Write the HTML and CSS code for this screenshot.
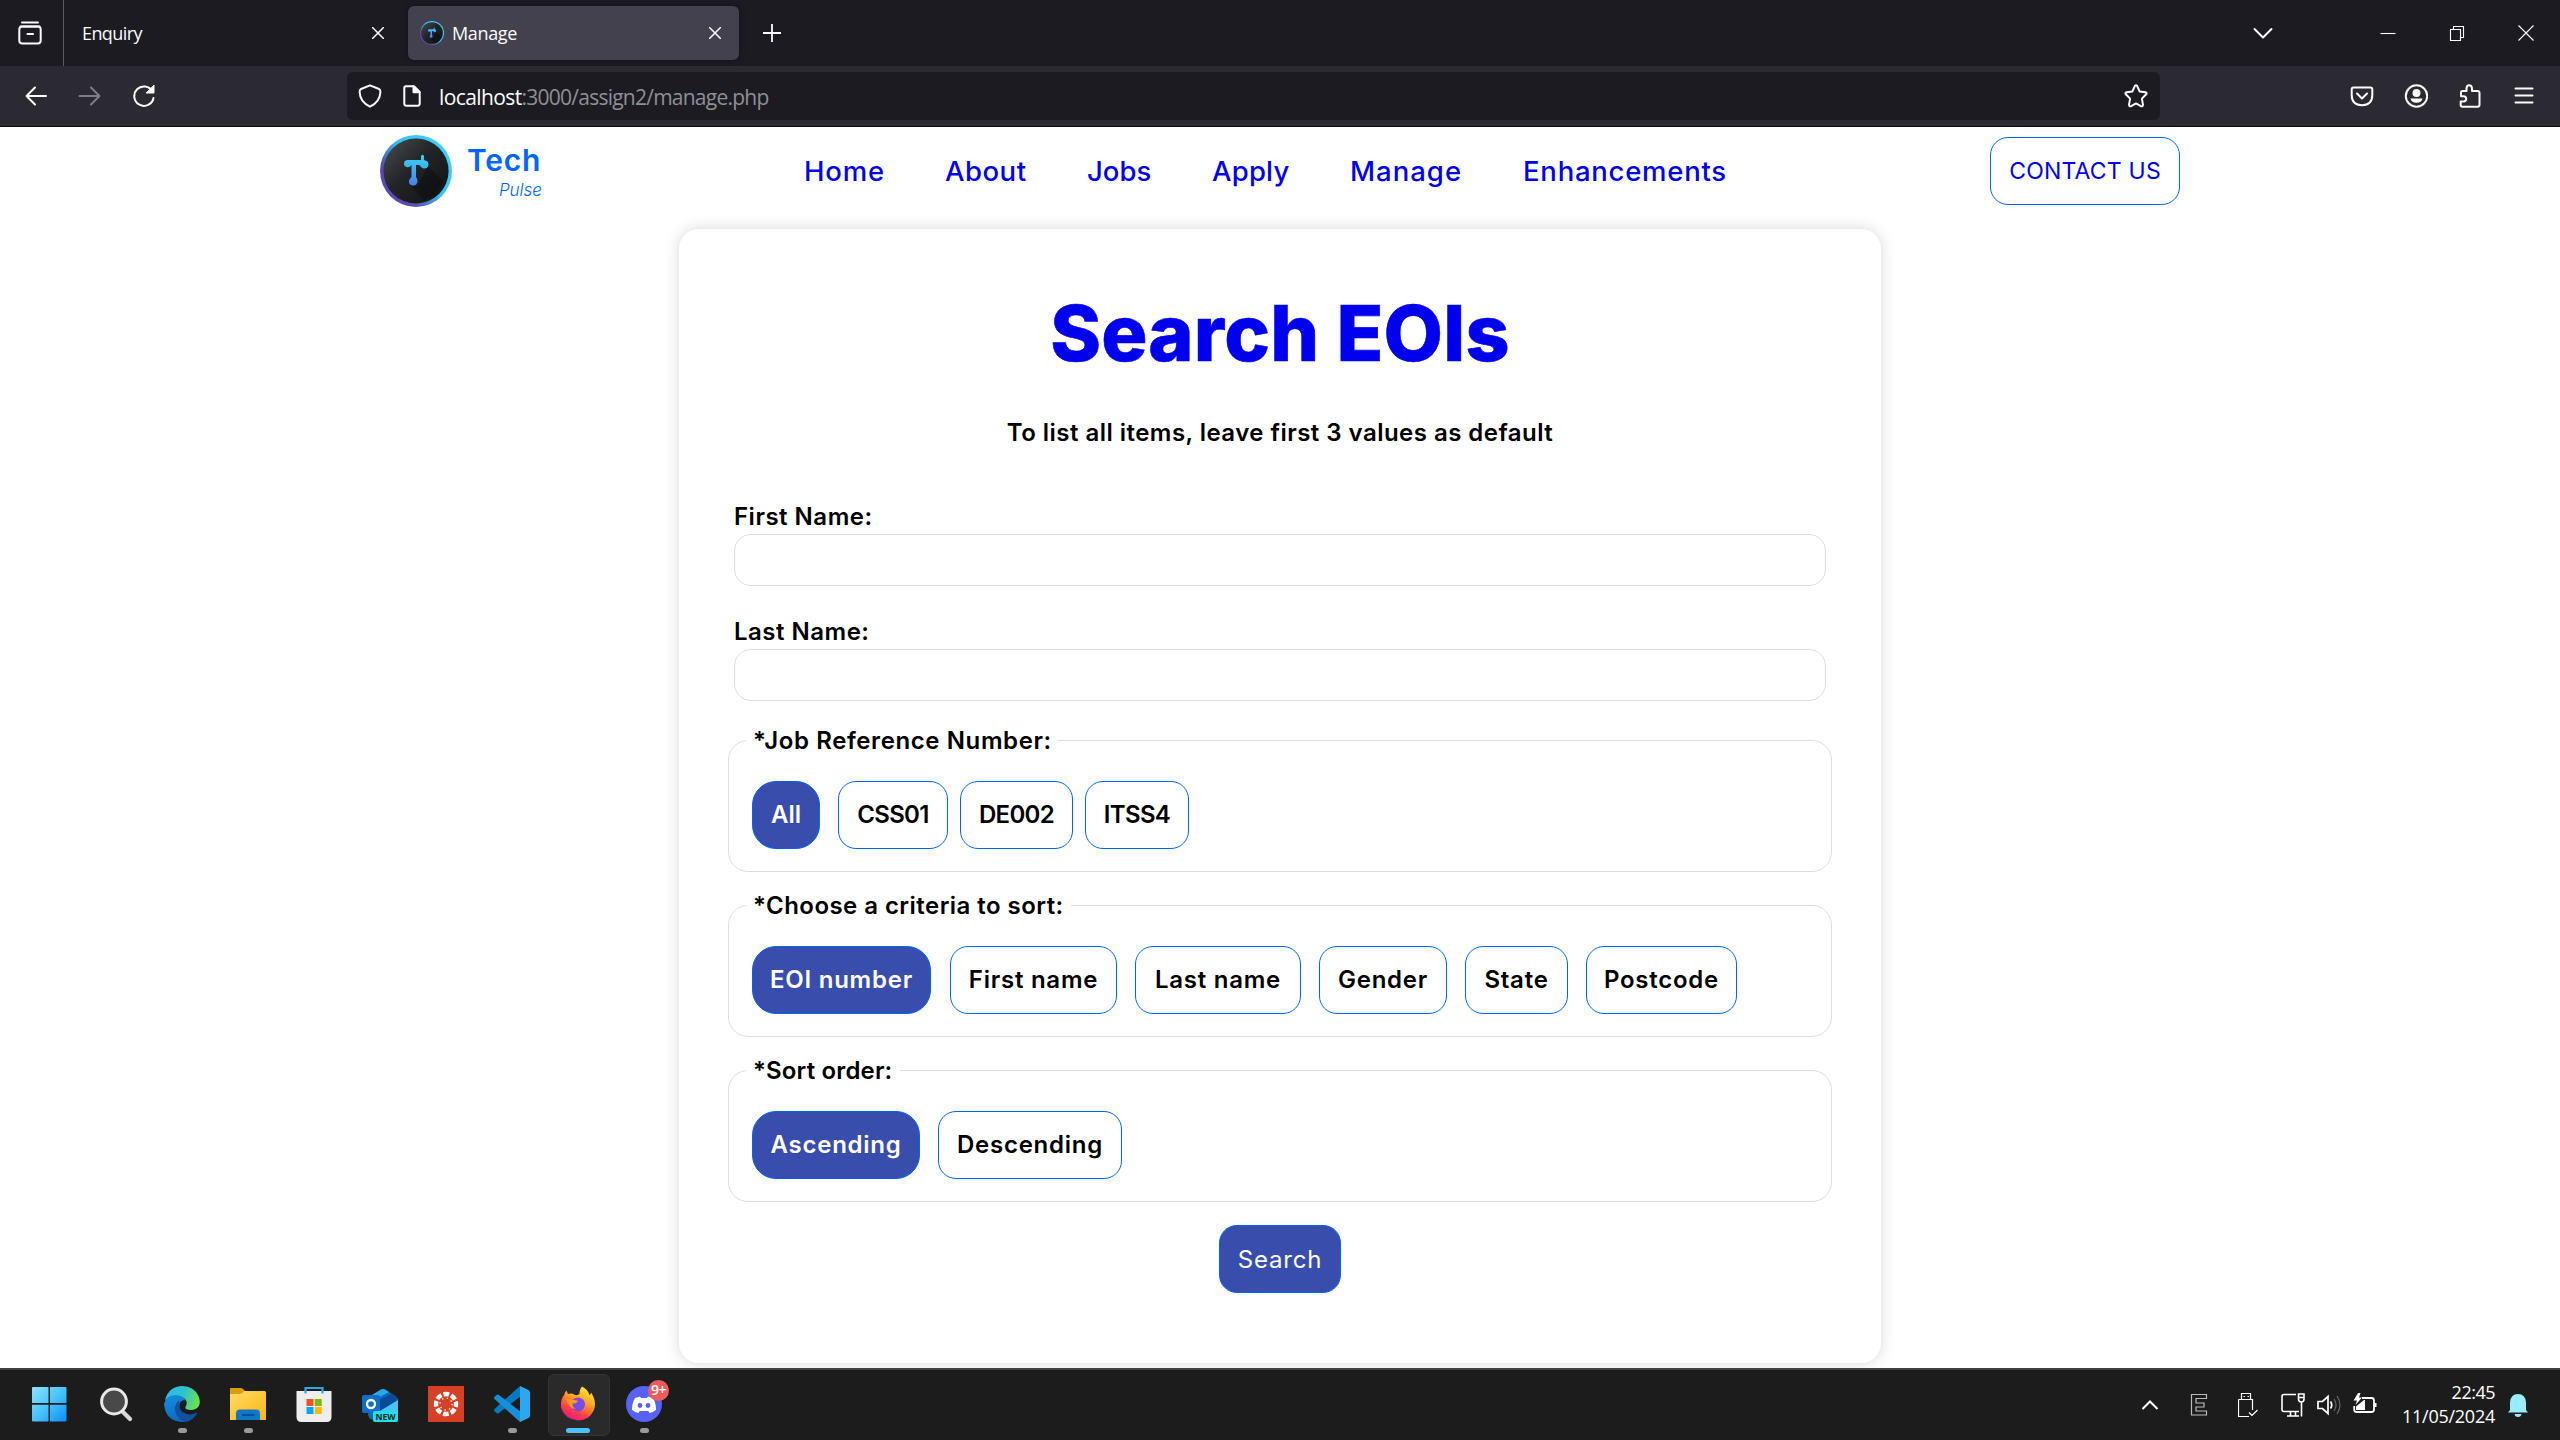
FILE: index.html
```
<!DOCTYPE html>
<html lang="en">
<head>
<meta charset="utf-8">
<title>Manage</title>
<link rel="stylesheet" href="styles.css">
</head>
<body>
<svg class="defs" width="0" height="0" aria-hidden="true">
  <defs>
    <linearGradient id="ring" x1="0" y1="1" x2="1" y2="0.2"><stop offset="0" stop-color="#5b3fc0"/><stop offset=".3" stop-color="#5a4bb0"/><stop offset=".6" stop-color="#35c4f0"/><stop offset="1" stop-color="#3fd0fa"/></linearGradient>
    <linearGradient id="disc" x1="0" y1="0" x2="1" y2="1"><stop offset="0" stop-color="#4a4d52"/><stop offset=".45" stop-color="#222427"/><stop offset="1" stop-color="#101113"/></linearGradient>
    <linearGradient id="tee" x1="0" y1="0" x2="0" y2="1"><stop offset="0" stop-color="#35d5f5"/><stop offset="1" stop-color="#4a80ee"/></linearGradient>
    <symbol id="logo" viewBox="0 0 72 72">
      <circle cx="36" cy="36" r="36" fill="url(#ring)"/>
      <circle cx="36" cy="36" r="32.6" fill="url(#disc)"/>
      <path d="M38 50 48 31 63 46Q58 60 44 65L32 52z" fill="#0b0c0d" opacity=".45"/>
      <path d="M28 25H41V21Q42.500 18.500 44 21V25Q49 26 48.500 30Q47.500 34 43.500 33.500Q40.500 33 39.500 30H36V42Q38 44 37.500 47Q36 51 33 50.500Q28.500 50 29 46Q29.200 44 31.500 42V30Q30 32.500 27.500 32.300Q24 32 24 28.600Q24 25 28 25z" fill="url(#tee)"/>
    </symbol>
  </defs>
</svg>

<header class="tabs">
  <div class="archive">
    <svg width="24" height="24" viewBox="0 0 24 24" class="line"><path d="M4 1.600H20M2.500 5.500H21.500"/><rect x="1.300" y="5.500" width="21.400" height="17" rx="3"/><path d="M9.500 13H15"/></svg>
  </div>
  <div class="tab">
    <span class="tab-name enquiry">Enquiry</span>
    <svg class="line x" width="12" height="12" viewBox="0 0 12 12"><path d="M.5.5 11.500 11.500M11.500.5.5 11.500"/></svg>
  </div>
  <div class="tab active">
    <svg width="24" height="24"><use href="#logo"/></svg>
    <span class="tab-name">Manage</span>
    <svg class="line x" width="12" height="12" viewBox="0 0 12 12"><path d="M.5.5 11.500 11.500M11.500.5.5 11.500"/></svg>
  </div>
  <svg class="line plus" width="18" height="18" viewBox="0 0 18 18"><path d="M0 9H18M9 0V18"/></svg>
  <div class="win">
    <svg class="line all-tabs" width="24" height="24" viewBox="0 0 24 24"><path d="M3.500 8 12 16.500 20.500 8"/></svg>
    <span><svg class="thin" width="16" height="16" viewBox="0 0 16 16"><path d="M.5 8.500H15.500"/></svg></span>
    <span><svg class="thin" width="16" height="16" viewBox="0 0 16 16"><path d="M1.500 4.500H11.500V15.500H1.500zM4.500 4.500V1.500H14.500V12.500H11.500"/></svg></span>
    <span><svg class="thin" width="16" height="16" viewBox="0 0 16 16"><path d="M.5.5 15.500 15.500M15.500.5.5 15.500"/></svg></span>
  </div>
</header>

<div class="toolbar">
  <div class="nav-buttons">
    <svg class="line" width="24" height="24" viewBox="0 0 24 24"><path d="M22 12H2.500M11 3.500 2.500 12 11 20.500"/></svg>
    <svg class="line dim" width="24" height="24" viewBox="0 0 24 24"><path d="M1.500 12H21.500M13 3.500 21.500 12 13 20.500"/></svg>
    <svg class="line" width="24" height="24" viewBox="0 0 24 24"><path d="M20.500 7.500A9.700 9.700 0 1 0 21.500 14"/><path d="M22 1.500V9H14.500z" fill="#fbfbfe" stroke-width="1"/></svg>
  </div>
  <div class="url">
    <svg class="line" width="24" height="24" viewBox="0 0 24 24"><path d="M12 1.300 21 5Q22.500 5.600 22.400 8Q22 18 12 22.700Q2 18 1.600 8Q1.500 5.600 3 5z"/></svg>
    <svg class="line page-icon" width="20" height="24" viewBox="0 0 20 24"><path d="M4 2.300H12L17.700 8V19.500Q17.700 21.700 15.500 21.700H4.500Q2.300 21.700 2.300 19.500V4Q2.300 2.300 4 2.300z"/><path d="M11.500 2.500V8.300H17.500z" fill="#fbfbfe"/></svg>
    <span class="address"><b>localhost</b><i>:3000/assign2/manage.php</i></span>
    <svg class="line star" width="24" height="24" viewBox="0 0 24 24"><path d="M10.900 1.900Q12 .4 13.100 1.900L15.600 7.400 21.400 8.200Q23.300 8.800 22.200 10.300L17.900 14.600 19 20.800Q19 22.700 17.300 22.300L12 19.400 6.700 22.300Q5 22.700 5 20.800L6.100 14.600 1.800 10.300Q.7 8.800 2.600 8.200L8.400 7.400z"/></svg>
  </div>
  <div class="actions">
    <svg class="line" width="24" height="24" viewBox="0 0 24 24"><path d="M3.500 3.500H20.500Q22.300 3.500 22.300 5.500V11Q22.300 21 12 21.300Q1.700 21 1.700 11V5.500Q1.700 3.500 3.500 3.500zM7 9.500 12 14.500 17 9.500"/></svg>
    <svg class="line" width="24" height="24" viewBox="0 0 24 24"><circle cx="12.500" cy="12" r="10.700"/><path d="M6.500 14.500H18.500Q17.500 18.800 12.500 18.800T6.500 14.500z" fill="#fbfbfe" stroke="none"/><circle cx="12.500" cy="9" r="4" fill="#fbfbfe" stroke="none"/></svg>
    <svg class="line" width="24" height="24" viewBox="0 0 24 24"><path d="M3 8.300Q3 7 4.500 7H8.500V4.500Q8.700 1.200 11.200 1.200T14 4.500V7H19.500Q21.500 7 21.500 9V20.800Q21.500 22.700 19.500 22.700H4.500Q2.700 22.700 2.700 21V17.500H5.500Q8.200 17.200 8.200 14.900T5.500 12.300H3z"/></svg>
    <svg class="line" width="24" height="24" viewBox="0 0 24 24"><path d="M3.500 4.500H20.500M3.500 11.500H20.500M3.500 18.500H20.500"/></svg>
  </div>
</div>

<main class="page">
  <div class="site-head">
    <a class="brand">
      <svg width="72" height="72"><use href="#logo"/></svg>
      <span class="brand-text"><span class="tech">Tech</span><span class="pulse">Pulse</span></span>
    </a>
    <nav class="menu">
      <a class="home">Home</a><a class="about">About</a><a class="jobs">Jobs</a><a class="apply">Apply</a><a class="manage">Manage</a><a class="enh">Enhancements</a>
    </nav>
    <a class="contact">CONTACT US</a>
  </div>

  <form class="card">
    <h1>Search EOIs</h1>
    <p class="hint">To list all items, leave first 3 values as default</p>
    <label class="field">First Name:<input type="text"></label>
    <label class="field">Last Name:<input type="text"></label>
    <fieldset class="group">
      <legend class="lg-job">*Job Reference Number:</legend>
      <div class="pills">
        <span class="pill on w-all">All</span><span class="pill code w-css">CSS01</span><span class="pill code near w-de">DE002</span><span class="pill code near w-it">ITSS4</span>
      </div>
    </fieldset>
    <fieldset class="group">
      <legend class="lg-crit">*Choose a criteria to sort:</legend>
      <div class="pills">
        <span class="pill on w-eoi">EOI number</span><span class="pill w-first">First name</span><span class="pill w-last">Last name</span><span class="pill w-gender">Gender</span><span class="pill w-state">State</span><span class="pill w-post">Postcode</span>
      </div>
    </fieldset>
    <fieldset class="group">
      <legend class="lg-order">*Sort order:</legend>
      <div class="pills">
        <span class="pill on w-asc">Ascending</span><span class="pill w-desc">Descending</span>
      </div>
    </fieldset>
    <button class="search" type="button">Search</button>
  </form>
</main>

<footer class="taskbar">
  <div class="apps">
    <div class="app"><svg width="36" height="36" viewBox="2 0 36 36"><defs><linearGradient id="wn" x1="0" y1="0" x2="1" y2="1"><stop offset="0" stop-color="#8be3ff"/><stop offset=".5" stop-color="#48c4fb"/><stop offset="1" stop-color="#0a8dfa"/></linearGradient></defs><path d="M3 1H18.500V17H2V2Q2 1 3 1zM20 1H35.500Q36.500 1 36.500 2V17H20zM2 18.800H18.500V35.500H3Q2 35.500 2 34.500zM20 18.800H36.500V34.500Q36.500 35.500 35.500 35.500H20z" fill="url(#wn)"/></svg></div>
    <div class="app"><svg width="36" height="36" viewBox="0 0 36 36"><path d="M24 25 32 33" stroke="#d5d8dc" stroke-width="4.200" stroke-linecap="round"/><circle cx="16" cy="15.500" r="12.400" fill="#494949" stroke="#e8e9eb" stroke-width="3"/></svg></div>
    <div class="app run"><svg width="36" height="36" viewBox="0 0 36 36"><defs><linearGradient id="e1" x1="0" y1=".2" x2="1" y2=".5"><stop offset="0" stop-color="#34b8ed"/><stop offset=".5" stop-color="#2cc3cf"/><stop offset="1" stop-color="#6be053"/></linearGradient><linearGradient id="e2" x1="0" y1="0" x2=".5" y2="1"><stop offset="0" stop-color="#1690dd"/><stop offset="1" stop-color="#0668c4"/></linearGradient></defs>
      <path d="M1 14Q5 0 18.500 0Q30 .5 34.500 10Q38 19 32 22.800Q27 25 22.500 23.200Q20.500 22 22 20Q24.500 14 18 11Q10 8 1 14z" fill="url(#e1)"/>
      <path d="M0 18Q2 9.500 11 9Q19 9.500 21.500 14.500Q17 13 15.500 18Q14 27 22 30Q28 31 33 27Q28.500 36 18 36Q1.500 35 0 18z" fill="url(#e2)"/>
      <path d="M15.500 14Q8.500 20 12 28Q15 34 21 35.500Q29.500 34 33 27.200Q32 26.300 30.500 27.500Q24 30 18.500 26Q13.500 22 15.500 14z" fill="#12519d"/></svg></div>
    <div class="app run"><svg width="36" height="36" viewBox="0 0 36 36"><defs><linearGradient id="fo" x1="0" y1="0" x2="1" y2="1"><stop offset="0" stop-color="#ffdc66"/><stop offset="1" stop-color="#f9b513"/></linearGradient></defs><path d="M0 3Q0 2 1 2H11Q12.500 2 15 5V9H0z" fill="#dd9d07"/><path d="M0 8H10Q12 8 14.500 5H34.500Q36 5 36 6.500V34H0z" fill="url(#fo)"/><path d="M6 34V27.500Q6 23.500 10 23.500H26Q30 23.500 30 27.500V34z" fill="#1076c8"/><path d="M12 29H24.500" stroke="#064a8b" stroke-width="1.600"/></svg></div>
    <div class="app"><svg width="36" height="36" viewBox="0 0 36 36"><path d="M.5 5H35.500V31Q35.500 36 30.500 36H5.500Q.5 36 .5 31z" fill="#eee"/><path d="M9.500 7.500V2H26.500V7.500" fill="none" stroke="#22abe8" stroke-width="2.200"/><path d="M10.500 13H17.500V20H10.500z" fill="#f25022"/><path d="M18.700 13H25.700V20H18.700z" fill="#7fba00"/><path d="M10.500 21H17.500V28H10.500z" fill="#00a4ef"/><path d="M18.700 21H25.700V28H18.700z" fill="#ffb900"/></svg></div>
    <div class="app"><svg width="36" height="36" viewBox="0 0 36 36"><path d="M5 12 19 3.500Q21 2.500 23 3.500L34 10.500 36 13V34H12Q6 33 6 28z" fill="#0d6ab8"/><path d="M9 9.500 19 3.500Q21 2.500 23 3.500L27 6 14 13z" fill="#28a8ea"/><path d="M17 14 30 7.500 35 11.500V15L18 25z" fill="#0b4a96"/><path d="M18 25 36 14V34H18z" fill="#49c3f5"/><rect y="9" width="18" height="18" rx="2" fill="#0f6fc6"/><circle cx="9" cy="18" r="4" fill="none" stroke="#fff" stroke-width="2.300"/><rect x="11" y="25" width="25" height="11" rx="2" fill="#25dfe2"/><text x="23.500" y="34.200" text-anchor="middle" textLength="20" lengthAdjust="spacingAndGlyphs" class="new">NEW</text></svg></div>
    <div class="app"><svg width="36" height="36" viewBox="0 0 36 36"><path d="M0 0H36V36H0z" fill="#d64027"/><circle cx="18" cy="18" r="10" fill="none" stroke="#fff" stroke-width="4.400" stroke-dasharray="5.650 2.200" stroke-dashoffset="2.800"/><circle cx="18" cy="18" r="6" fill="none" stroke="#fff" stroke-width="1.300" stroke-dasharray="1.300 3.410"/></svg></div>
    <div class="app run"><svg width="36" height="36" viewBox="0 0 36 36"><path d="M26 0 27 10 5 27Q3.500 28 2.500 27L.3 25Q-.5 24 .5 23z" fill="#0079c4"/><path d="M26 36 27 26 5 9Q3.500 8 2.500 9L.3 11Q-.5 12 .5 13z" fill="#1590d8"/><path d="M26 0 34.500 4Q36 5 36 6.500V29.500Q36 31 34.500 32L26 36z" fill="#2ba8f2"/></svg></div>
    <div class="app run current"><svg width="36" height="36" viewBox="0 0 36 36"><defs><linearGradient id="ff" x1=".8" y1="0" x2=".3" y2="1"><stop offset="0" stop-color="#ffee3f"/><stop offset=".4" stop-color="#ffa51e"/><stop offset=".75" stop-color="#ff3d4a"/><stop offset="1" stop-color="#e31587"/></linearGradient></defs><path d="M22 .5Q28 3.500 29.500 9Q31 8.500 31 6.500Q37 15 34 24Q29 34.500 18 34.500Q5 33.500 1.200 22Q0 14 4.500 8.500Q4.500 6.500 6.500 4.500L8 8Q12 7 14 8.500Q17 10 19.500 8Q19.500 3 22 .5z" fill="url(#ff)"/><circle cx="18" cy="18.500" r="7" fill="#7a4be6"/><path d="M6 13Q11 12.500 14 14Q16 14 18 15Q16 18 12.500 17.500Q12 21 16 23Q9.500 23 6 13z" fill="#ff9a1f"/></svg></div>
    <div class="app run"><svg width="36" height="36" viewBox="0 0 36 36"><circle cx="18" cy="18" r="18" fill="#5663f5"/><path d="M14 10.500 15 12H21L22 10.500 27 12Q30 17 30 24Q27 26.500 23.500 27L22.300 25H13.700L12.500 27Q9 26.500 6 24Q6 17 9 12z" fill="#fff"/><circle cx="14" cy="19.500" r="2.400" fill="#5663f5"/><circle cx="22" cy="19.500" r="2.400" fill="#5663f5"/></svg><em class="badge">9+</em></div>
  </div>
  <div class="tray">
    <svg class="up" width="18" height="12" viewBox="0 0 18 12"><path d="M1.500 10 9 2.500 16.500 10" stroke-width="2"/></svg>
    <svg class="e" width="18" height="24" viewBox="0 0 18 24"><path d="M1.500 1.500H16.500V5.500H6V10H14V14H6V18H16.500V22H1.500z" stroke="#bbb"/></svg>
    <svg class="usb" width="20" height="24" viewBox="0 0 20 24"><path d="M3.500.5H12.500V6.500H3.500zM.5 6.500H14.500V17M.5 6.500V23.500H11M5.500 3.500H7M9.500 3.500H11M11 19.500 14 22.500 19.500 17"/></svg>
    <svg class="net" width="24" height="24" viewBox="0 0 24 24"><path d="M15 1.500H3Q1 1.500 1 3.500V16.500Q1 18.500 3 18.500H18M6 23H18M9.500 18.500V23M14.500 18.500V23M17.500 1H23V6Q23 9 20.300 9T17.500 6zM17.500 4.500H23M20.500 9V23.500" stroke-width="1.600"/></svg>
    <svg class="vol" width="24" height="24" viewBox="0 0 24 24"><path d="M1 8.500H5.500L11 3.500V20.500L5.500 15.500H1zM13.500 8.500Q16 12 13.500 15.500" stroke-width="1.700"/><path d="M17 6Q21 12 17 18M20 3Q26 12 20 21" stroke="#666"/></svg>
    <svg class="bat" width="24" height="24" viewBox="0 0 24 24"><path d="M9 5H18.500Q21 5 21 7.500V16.500Q21 19 18.500 19H3.500Q1.200 19 1.200 16.500V13" stroke-width="1.800"/><path d="M21 10H23.500V14H21zM3 17V13.500L11 7H12V17zM5 0 .5 7.500H4L2.500 12 9 4.500H6L7.500 0z" fill="#fff" stroke="none"/></svg>
    <time class="clock"><span class="hour">22:45</span><span class="date">11/05/2024</span></time>
    <svg class="bell" width="20" height="24" viewBox="0 0 20 24"><path d="M2 17V9.500Q2.500 1 10 1T18 9.500V17L20 19.500H0zM6.500 21H13.500Q13 24 10 24T6.500 21z" fill="#99ecff" stroke="none"/></svg>
  </div>
</footer>
</body>
</html>
```
FILE: styles.css
```
* { box-sizing: border-box; }
html, body { margin: 0; height: 100%; }
body {
  display: flex;
  flex-direction: column;
  width: 2560px;
  height: 1440px;
  overflow: hidden;
  background: #fff;
  color: #000;
  font-family: Inter, "Liberation Sans", sans-serif;
}
svg { display: block; flex: none; }
.line { fill: none; stroke: #fbfbfe; stroke-width: 2; stroke-linecap: round; stroke-linejoin: round; }
.thin { fill: none; stroke: #fff; stroke-width: 1.1; }
.dim { opacity: .4; }

/* tab strip */
.tabs {
  display: flex;
  align-items: center;
  flex: 0 0 66px;
  background: #1c1b22;
  color: #fbfbfe;
  font-family: "Open Sans", "Liberation Sans", sans-serif;
  font-size: 18px;
}
.archive { width: 64px; height: 66px; padding: 21px 0 0 18px; border-right: 1px solid #5b5b66; }
.tab { display: flex; align-items: center; width: 331px; height: 54px; margin-right: 13px; padding: 0 11px 0 18px; }
.active { gap: 8px; padding: 0 18px 0 12px; margin-right: 24px; background: #42414d; border-radius: 6px; box-shadow: 0 0 6px rgba(0, 0, 0, .4); }
.tab-name { flex: 1; letter-spacing: -.35px; }
.enquiry { letter-spacing: -.6px; }
.x { stroke-width: 1.5; }
.plus { stroke-width: 1.8; }
.win { display: flex; align-items: center; margin-left: auto; }
.all-tabs { margin-right: 78px; }
.win span { display: flex; justify-content: center; width: 69px; }

/* toolbar */
.toolbar { display: flex; align-items: center; flex: 0 0 61px; background: #2b2a33; border-bottom: 1px solid #0c0c0d; }
.nav-buttons { display: flex; gap: 30px; width: 347px; padding-left: 24px; }
.url { display: flex; align-items: center; width: 1813px; height: 48px; padding: 0 12px 0 11px; background: #1c1b22; border-radius: 6px; }
.page-icon { margin-left: 20px; }
.address { flex: 1; margin-left: 17px; padding-top: 2px; color: #8f8f96; font-family: "Open Sans", "Liberation Sans", sans-serif; font-size: 21px; }
.address b { color: #fbfbfe; font-weight: 400; letter-spacing: -.6px; }
.address i { font-style: normal; letter-spacing: -.76px; }
.actions { display: flex; gap: 30px; margin-left: auto; padding-right: 24px; }

/* site header */
.page { flex: 0 0 1241px; overflow: hidden; }
.site-head { display: flex; align-items: center; height: 88px; padding: 0 380px; }
.brand { display: flex; width: 424px; color: #0065fe; }
.brand-text { display: flex; flex-direction: column; margin-left: 15px; width: 75px; }
.tech { height: 42px; font-size: 30px; font-weight: 600; line-height: 51px; letter-spacing: .8px; }
.pulse { align-self: flex-end; font-size: 17px; font-style: italic; font-weight: 300; line-height: 26px; }
.menu { display: flex; gap: 60px; color: #00e; font-size: 27.500px; font-weight: 500; white-space: nowrap; }
.home { width: 81px; letter-spacing: .8px; }
.about { width: 82px; letter-spacing: .5px; }
.jobs { width: 65px; letter-spacing: 0; }
.apply { width: 78px; letter-spacing: .2px; }
.manage { width: 113px; letter-spacing: 1px; }
.enh { width: 205px; letter-spacing: .75px; }
.contact {
  width: 190px; height: 68px; margin-left: auto;
  border: 1px solid #0065fe; border-radius: 18px;
  color: #00e; font-size: 23px; line-height: 67px; text-align: center; letter-spacing: .2px;
}

/* search form */
.card {
  display: flex;
  flex-direction: column;
  width: 1202px;
  height: 1134px;
  margin: 14px 0 0 679px;
  padding: 58px 49px 0;
  border-radius: 20px;
  background: #fff;
  box-shadow: 0 0 15px rgba(0, 0, 0, .16);
  font-size: 24px;
  font-weight: 600;
}
h1 { margin: 0; color: #00e; font-size: 77px; font-weight: 800; line-height: 92px; letter-spacing: .2px; text-align: center; -webkit-text-stroke: .6px #00e; }
.hint { margin: 39px 0 52px; line-height: 30px; text-align: center; letter-spacing: .47px; }
.field { display: flex; flex-direction: column; margin: 0 6px 29px; line-height: 34px; letter-spacing: .5px; }
.field input { height: 52px; border: 1px solid #ddd; border-radius: 17px; background: #fff; }
.group { height: 148px; min-width: 0; margin: 0 0 17px; padding: 0 23px; border: 1px solid #ddd; border-radius: 20px; }
.field + .group { margin-top: -6px; }
.group legend { height: 32px; margin-left: -6px; padding-left: 7px; line-height: 33px; white-space: nowrap; }
.lg-job { width: 312px; letter-spacing: .6px; }
.lg-crit { width: 325px; letter-spacing: .45px; }
.lg-order { width: 154px; letter-spacing: .15px; }
.pills { display: flex; gap: 18px; padding-top: 25px; }
.pill { height: 68px; border: 1px solid #0065fe; border-radius: 18px; line-height: 66px; text-align: center; letter-spacing: .75px; white-space: nowrap; }
.on { border-radius: 24px; background: #394dac; color: #fff; }
.code { letter-spacing: -.65px; }
.near { margin-left: -6px; }
.w-all { width: 68px; letter-spacing: 0; }
.w-css { width: 110px; }
.w-de { width: 113px; }
.w-it { width: 104px; }
.w-eoi { width: 179px; margin-right: 1px; }
.w-first { width: 167px; }
.w-last { width: 166px; }
.w-gender { width: 128px; }
.w-state { width: 103px; }
.w-post { width: 151px; }
.w-asc { width: 168px; }
.w-desc { width: 184px; }
.search {
  align-self: center; width: 122px; height: 68px; margin-top: 6px; padding: 0;
  border: 1px solid #0065fe; border-radius: 18px; background: #394dac;
  color: #fff; font: 400 24px Inter, "Liberation Sans", sans-serif; letter-spacing: .8px;
}

/* taskbar */
.taskbar { display: flex; flex: 0 0 72px; background: #1c1c1c; border-top: 2px solid #404040; color: #fff; }
.apps { display: flex; padding: 3px 0 0 17px; }
.app { position: relative; width: 66px; height: 62px; padding: 13px 15px 0; }
.run::after { content: ""; position: absolute; left: 29px; top: 55px; width: 9px; height: 5px; border-radius: 3px; background: #9a9a9a; }
.current::before { content: ""; position: absolute; left: 3px; top: 1px; width: 60px; height: 60px; border: 1px solid #343434; border-radius: 6px; background: #2a2a2a; }
.current svg { position: relative; }
.current::after { left: 21px; width: 24px; background: #4cc2ff; }
.badge {
  position: absolute; left: 37px; top: 7px; width: 21px; height: 21px; border-radius: 50%;
  background: #f15b5b; font: 600 14px/20px "Open Sans", sans-serif; text-align: center; letter-spacing: -.5px;
}
.new { font: 700 9.500px "Open Sans", sans-serif; fill: #04262c; }
.tray { display: flex; align-items: center; margin-left: auto; padding-right: 32px; }
.tray svg { fill: none; stroke: #fff; stroke-width: 1.2; }
.tray .up { margin-right: 31px; }
.tray .e { margin-right: 30px; }
.tray .usb { margin-right: 23px; }
.tray .net { margin-right: 12px; }
.tray .vol { margin-right: 12px; }
.clock { display: flex; flex-direction: column; align-items: flex-end; width: 118px; margin-right: 13px; padding-bottom: 3px; font: 18px/24px "Open Sans", sans-serif; }
.hour { letter-spacing: -.5px; }
.date { letter-spacing: -.25px; }
```
